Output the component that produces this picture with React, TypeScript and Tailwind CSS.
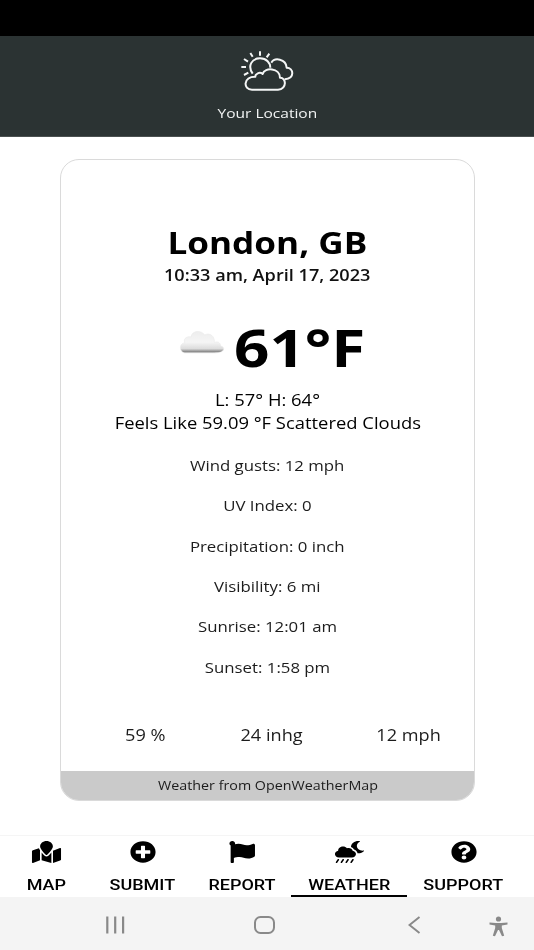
import type { ReactNode } from "react";
import { FaCloudMoonRain, FaFlag, FaMapMarked, FaPlusCircle, FaQuestionCircle } from "react-icons/fa";

const details = [
  "Wind gusts: 12 mph",
  "UV Index: 0",
  "Precipitation: 0 inch",
  "Visibility: 6 mi",
  "Sunrise: 12:01 am",
  "Sunset: 1:58 pm",
];

function Wide({ children, className = "scale-x-[1.18]" }: { children: ReactNode; className?: string }) {
  return <span className={`inline-block whitespace-nowrap ${className}`}>{children}</span>;
}

function HeaderIcon() {
  return (
    <svg
      className="ml-[2px] h-[42px] w-[54px]"
      viewBox="0 0 162 126"
      fill="none"
      stroke="#f4f6f6"
      strokeWidth="6"
      strokeLinecap="butt"
      strokeLinejoin="round"
    >
      <path d="M57 1V14M28 6L35 17M85 8L77 19M9 24L21 32M1 48H15M9 72L22 65" />
      <path d="M35 68C18 43 34 22 57 22C77 22 88 36 88 50" />
      <path d="M91 35C100 19 135 22 137 50C158 51 163 82 131 85" />
      <path d="M33 116H111C139 114 136 79 117 80C117 51 71 47 65 69C56 61 42 69 43 77C7 76 5 116 33 116Z" />
    </svg>
  );
}

function CloudPicture() {
  return (
    <svg className="-mt-[8px] h-[24px] w-[46px]" viewBox="0 0 138 72">
      <defs>
        <linearGradient id="cloud" x1="0" y1="0" x2="0" y2="1">
          <stop offset="0" stopColor="#ededed" />
          <stop offset="0.5" stopColor="#f5f5f5" />
          <stop offset="0.8" stopColor="#dcdcdc" />
          <stop offset="0.93" stopColor="#8e8e8e" />
          <stop offset="1" stopColor="#c4c4c4" />
        </linearGradient>
        <filter id="soft" x="-5%" y="-5%" width="110%" height="110%">
          <feGaussianBlur stdDeviation="1.3" />
        </filter>
      </defs>
      <path
        d="M17 66C1 62 -1 38 17 35C12 21 26 15 36 18C39 -3 68 -3 77 12C92 3 108 16 106 34C120 29 125 39 125 45C139 48 136 61 122 64C116 66 108 66 100 66Z"
        fill="url(#cloud)"
        stroke="#e6e6e6"
        strokeWidth="1.5"
        filter="url(#soft)"
      />
    </svg>
  );
}

function NavItem({
  icon,
  label,
  className,
  active = false,
}: {
  icon: ReactNode;
  label: string;
  className: string;
  active?: boolean;
}) {
  return (
    <button className={`flex h-full flex-col items-center ${className}`}>
      <span className="mt-[4px] flex h-[23px] scale-x-[1.18] items-center text-[22px]">{icon}</span>
      <span className="mt-[12px] h-[20px] leading-[20px]">
        <Wide className="scale-x-[1.2]">{label}</Wide>
      </span>
      {active && <span className="mt-auto h-[2px] w-full shrink-0 bg-black" />}
    </button>
  );
}

export default function App() {
  return (
    <div className="flex h-[950px] w-[534px] flex-col overflow-hidden bg-white font-['Open_Sans',sans-serif] text-[#111]">
      <div className="h-[36px] shrink-0 bg-black" />
      <header className="flex h-[101px] shrink-0 flex-col items-center border-b border-[#4a5050] bg-[#2b3333] pt-[15px] text-[#f2f4f4]">
        <HeaderIcon />
        <p className="mt-[10px] h-[20px] text-[13.5px] leading-[20px]">
          <Wide className="scale-x-[1.15]">Your Location</Wide>
        </p>
      </header>

      <main className="flex h-[698px] shrink-0 flex-col items-start pt-[22px] pl-[60px]">
        <section className="flex h-[642px] w-[415px] flex-col items-center overflow-hidden rounded-[19px] border border-[#dadada] text-center">
          <h1 className="mt-[63px] h-[40px] text-[30px] leading-[40px] font-bold text-black">
            <Wide className="scale-x-[1.17]">London, GB</Wide>
          </h1>
          <p className="h-[24px] text-[15.5px] leading-[24px] font-semibold">
            <Wide className="scale-x-[1.17]">10:33 am, April 17, 2023</Wide>
          </p>
          <div className="mt-[30px] flex h-[60px] w-full items-center pl-[118px]">
            <CloudPicture />
            <span className="ml-[19px] text-[52.5px] leading-[60px] font-bold text-black">
              <Wide className="scale-x-[1.18]">61°F</Wide>
            </span>
          </div>
          <p className="mt-[11px] h-[23px] text-[15.6px] leading-[24px] font-medium text-black">
            <Wide>L: 57° H: 64°</Wide>
          </p>
          <p className="h-[24px] text-[15.6px] leading-[24px] font-medium text-black">
            <Wide>Feels Like 59.09 °F Scattered Clouds</Wide>
          </p>
          <ul className="mt-[9.8px] text-[14.6px] leading-[40.4px] text-[#1c1c1c]">
            {details.map((line) => (
              <li key={line} className="h-[40.4px]">
                <Wide className="scale-x-[1.15]">{line}</Wide>
              </li>
            ))}
          </ul>
          <div className="mt-[37.8px] flex h-[20px] w-full justify-between pr-[38px] pl-[67px] text-[15.5px] leading-[20px] text-[#1c1c1c]">
            <Wide className="scale-x-[1.17]">59 %</Wide>
            <Wide className="scale-x-[1.17]">24 inhg</Wide>
            <Wide className="scale-x-[1.17]">12 mph</Wide>
          </div>
          <footer className="mt-auto h-[29px] w-full bg-[#cacaca] text-[13px] leading-[28px] text-[#1c1c1c]">
            <Wide className="scale-x-[1.1]">Weather from OpenWeatherMap</Wide>
          </footer>
        </section>
      </main>

      <nav className="flex h-[62px] shrink-0 border-t border-[#f5f5f5] font-['Roboto',sans-serif] text-[15px] font-medium text-black">
        <NavItem icon={<FaMapMarked className="h-[22px] w-[25px]" />} label="MAP" className="w-[93px]" />
        <NavItem icon={<FaPlusCircle />} label="SUBMIT" className="w-[99px]" />
        <NavItem icon={<FaFlag />} label="REPORT" className="w-[99px]" />
        <NavItem
          icon={<FaCloudMoonRain className="h-[22px] w-[25px]" />}
          label="WEATHER"
          className="w-[116px]"
          active
        />
        <NavItem icon={<FaQuestionCircle />} label="SUPPORT" className="w-[113px]" />
      </nav>

      <div className="flex h-[53px] shrink-0 items-center bg-[#f4f4f4] pt-[2px] pl-[105px] text-[#898989]">
        <svg className="h-[18px] w-[20px]" viewBox="0 0 20 18" stroke="currentColor" strokeWidth="2.2">
          <path d="M2.3 0.5V17.5M10.2 0.5V17.5M18.1 0.5V17.5" />
        </svg>
        <svg className="ml-[129px] h-[18px] w-[21px]" viewBox="0 0 21 18" fill="none" stroke="currentColor" strokeWidth="2">
          <rect x="1" y="1" width="19" height="16" rx="5.5" />
        </svg>
        <svg className="ml-[133px] h-[18px] w-[13px]" viewBox="0 0 13 18" fill="none" stroke="currentColor" strokeWidth="2">
          <path d="M11.5 1L1.5 9L11.5 17" />
        </svg>
        <svg className="mt-[3px] ml-[68px] h-[21px] w-[19px]" viewBox="0 0 19 21" fill="currentColor">
          <circle cx="9.5" cy="3" r="2.6" />
          <path d="M0.5 6.5L7 7H12L18.5 6.5V8.5L12.8 9.5V12L15.2 19.8L13 20.2L10 14H9L6 20.2L3.8 19.8L6.2 12V9.5L0.5 8.5Z" />
        </svg>
      </div>
    </div>
  );
}
